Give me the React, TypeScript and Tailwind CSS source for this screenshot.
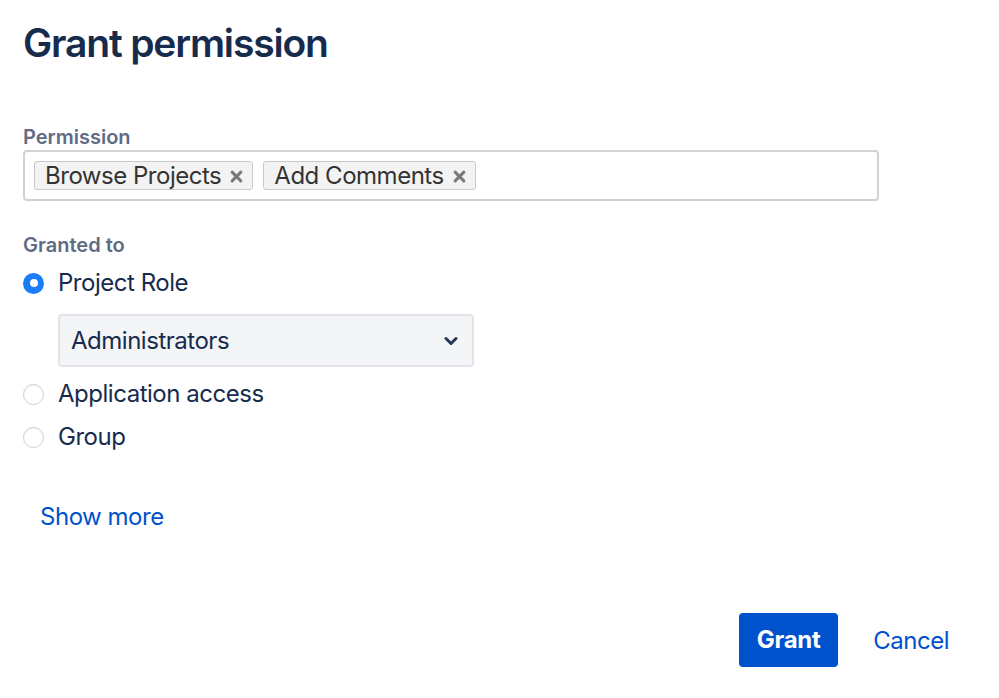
import React, { useState } from 'react';

const font = { fontFamily: 'Inter, "Noto Sans", sans-serif' };

function Tag({ label }: { label: string }) {
  return (
    <span className="flex h-[29px] items-center gap-[9px] rounded-[3px] border border-[#c9c9c9] bg-[#f3f3f3] pl-[10px] pr-[9px] text-[24px] leading-[28px] tracking-[-0.02em] text-[#333333]">
      {label}
      <svg width="13" height="13" viewBox="0 0 12 12" className="mt-[1px]">
        <path d="M2 2 L10 10 M10 2 L2 10" stroke="#7a7a7a" strokeWidth="2.8" strokeLinecap="round" />
      </svg>
    </span>
  );
}

function Radio({ checked }: { checked: boolean }) {
  if (checked) {
    return (
      <span className="flex h-[21px] w-[21px] shrink-0 items-center justify-center rounded-full bg-[#1a7cf7]">
        <span className="h-[8px] w-[8px] rounded-full bg-white" />
      </span>
    );
  }
  return <span className="h-[21px] w-[21px] shrink-0 rounded-full border border-[#cfcfcf] bg-white shadow-[inset_0_1px_1px_rgba(0,0,0,0.06)]" />;
}

export default function App() {
  const [grantee, setGrantee] = useState('role');

  const option = (key: string, label: string) => (
    <button
      onClick={() => setGrantee(key)}
      className="flex h-[32px] items-center gap-[14px] text-left text-[24px] leading-[32px] tracking-[-0.02em] text-[#172b4d]"
    >
      <Radio checked={grantee === key} />
      <span>{label}</span>
    </button>
  );

  return (
    <div style={font} className="h-[698px] w-[999px] bg-white pl-[23px] pt-[19px]">
      <h1 className="h-[48px] text-[39px] font-semibold leading-[48px] tracking-[-0.03em] text-[#172b4d]">
        Grant permission
      </h1>

      <div className="mt-[58px] text-[20px] font-semibold leading-[24px] text-[#5e6c84]">Permission</div>
      <div className="mt-[1px] flex h-[51px] w-[856px] items-center gap-[10px] rounded-[4px] border-2 border-[#d2d2d2] pl-[9px]">
        <Tag label="Browse Projects" />
        <Tag label="Add Comments" />
      </div>

      <div className="mt-[32px] text-[20px] font-semibold leading-[24px] text-[#5e6c84]">Granted to</div>

      <div className="mt-[10px] flex flex-col">
        {option('role', 'Project Role')}
        <div className="ml-[35px] mt-[15px] flex h-[53px] w-[416px] items-center justify-between rounded-[4px] border-2 border-[#e2e4e9] bg-[#f4f5f7] pl-[11px] pr-[14px] text-[24px] tracking-[-0.02em] text-[#172b4d]">
          <span>Administrators</span>
          <svg width="14" height="10" viewBox="0 0 14 10">
            <path d="M2 2.5 L7 7.5 L12 2.5" fill="none" stroke="#253858" strokeWidth="3" strokeLinecap="round" strokeLinejoin="round" />
          </svg>
        </div>
        <div className="mt-[11px]">{option('app', 'Application access')}</div>
        <div className="mt-[11px]">{option('group', 'Group')}</div>
      </div>

      <button className="ml-[17px] mt-[48px] block text-[24px] leading-[32px] tracking-[-0.02em] text-[#0052cc]">
        Show more
      </button>

      <div className="mt-[80px] flex items-center justify-end gap-[35px] pr-[50px]">
        <button className="h-[54px] w-[99px] rounded-[4px] bg-[#0052cc] text-[24px] font-bold tracking-[-0.01em] text-white">
          Grant
        </button>
        <button className="mt-[2px] text-[24px] leading-[32px] tracking-[-0.02em] text-[#0052cc]">Cancel</button>
      </div>
    </div>
  );
}
